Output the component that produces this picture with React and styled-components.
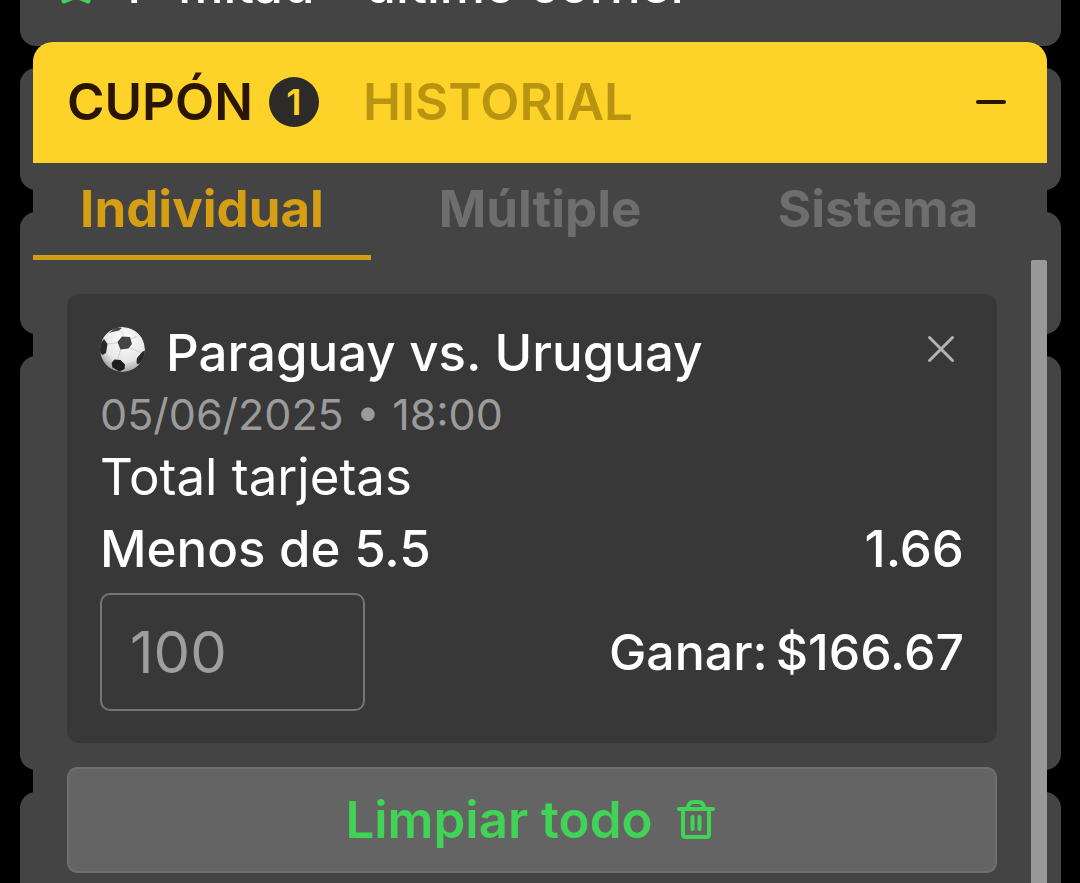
import React, { useState } from "react";
import styled, { createGlobalStyle } from "styled-components";

const GlobalStyle = createGlobalStyle`
  *, *::before, *::after { box-sizing: border-box; }
  body {
    margin: 0;
    background: #000;
    color: #fff;
    font-family: Inter, "Liberation Sans", sans-serif;
    font-size: 51px;
  }
  button, input { font: inherit; color: inherit; margin: 0; }
  button { border: 0; padding: 0; background: none; cursor: pointer; }
`;

const Page = styled.div`
  position: relative;
  height: 100vh;
  overflow: hidden;
`;

const Feed = styled.main`
  display: flex;
  flex-direction: column;
  gap: 22px;
  padding: 0 19px 0 20px;
  margin-top: -76px;
`;

const Market = styled.section`
  flex: none;
  display: flex;
  align-items: center;
  gap: 24px;
  height: ${(p) => (p.$open ? 414 : 122)}px;
  padding: 0 36px;
  border-radius: 16px;
  background: #444;
`;

const MarketTitle = styled.h2`
  margin: 0;
  font-size: 51px;
  line-height: 60px;
  font-weight: 500;
`;

const Sheet = styled.aside`
  position: absolute;
  inset: 42px 33px 0;
  display: flex;
  flex-direction: column;
  overflow: hidden;
  border-radius: 20px 20px 0 0;
  background: #444;
`;

const SheetHeader = styled.header`
  flex: none;
  display: flex;
  align-items: center;
  height: 121px;
  padding: 0 40px 2px 34px;
  background: #fdd329;
`;

const HeaderTab = styled.button`
  display: flex;
  align-items: center;
  gap: 16px;
  margin-right: 44px;
  font-weight: 600;
  line-height: 60px;
  color: ${(p) => (p.$active ? "#2a1600" : "#b99410")};
`;

const Badge = styled.span`
  display: grid;
  place-items: center;
  width: 50px;
  height: 50px;
  border-radius: 50%;
  background: #2d2b2a;
  color: #fdd329;
  font-size: 36px;
  line-height: 50px;
`;

const MinimizeButton = styled.button`
  display: flex;
  margin-left: auto;
  color: #2a1600;
`;

const Tabs = styled.nav`
  flex: none;
  display: flex;
`;

const Tab = styled.button`
  flex: 1;
  height: 97px;
  border-bottom: 5px solid ${(p) => (p.$active ? "#d09e16" : "transparent")};
  color: ${(p) => (p.$active ? "#d69e12" : "#6e6e6e")};
  font-weight: 700;
  line-height: 60px;
`;

const Body = styled.div`
  flex: 1;
  min-height: 0;
  display: flex;
`;

const Content = styled.div`
  flex: 1;
  min-width: 0;
  display: flex;
  flex-direction: column;
  gap: 24px;
  padding: 34px 34px 10px;
`;

const ScrollThumb = styled.div`
  width: 16px;
  border-radius: 2px 2px 0 0;
  background: #999;
`;

const BetCard = styled.article`
  padding: 33px 33px 32px;
  border-radius: 12px;
  background: #383838;
`;

const TitleRow = styled.div`
  display: flex;
  align-items: flex-start;
  height: 52px;
`;

const Match = styled.h3`
  flex: 1;
  margin: 0 0 0 20px;
  font-size: 51px;
  font-weight: 500;
  line-height: 52px;
`;

const CloseButton = styled.button`
  display: flex;
  color: #b4b4b4;
`;

const Kickoff = styled.p`
  margin: 0;
  font-size: 43px;
  line-height: 70px;
  color: #9b9b9b;
`;

const MarketName = styled.p`
  margin: 0;
  line-height: 56px;
`;

const Row = styled.div`
  display: flex;
  align-items: center;
  justify-content: space-between;
  font-weight: 500;
  line-height: 88px;
`;

const StakeInput = styled.input`
  width: 265px;
  height: 118px;
  padding: 0 28px;
  border: 2px solid #757575;
  border-radius: 10px;
  background: transparent;
  color: #9e9e9e;
  font-size: 58px;
  font-weight: 400;
  outline: none;
`;

const Winnings = styled.div`
  display: flex;
  gap: 8px;
  font-size: 50px;
`;

const ClearButton = styled.button`
  display: flex;
  align-items: center;
  justify-content: center;
  gap: 20px;
  flex: none;
  height: 106px;
  border: 2px solid #6f6f6f;
  border-radius: 10px;
  background: #646464;
  color: #41d356;
  font-weight: 600;
  line-height: 60px;
`;

const StarIcon = () => (
  <svg width="40" height="40" viewBox="0 0 40 40" aria-hidden="true">
    <path
      d="M20 3l5 10 11 1.500-8 8 4 13.500L20 31 8 36l4-13.500-8-8L15 13z"
      fill="#3fd45c"
      stroke="#3fd45c"
      strokeWidth="5"
      strokeLinejoin="round"
    />
  </svg>
);

const BallIcon = () => (
  <svg width="46" height="46" viewBox="0 0 46 46" role="img" aria-label="Fútbol">
    <defs>
      <radialGradient id="ballShade" cx="0.55" cy="0.3" r="0.72">
        <stop offset="0" stopColor="#fff" />
        <stop offset="0.65" stopColor="#e6e6e6" />
        <stop offset="1" stopColor="#9a9a9a" />
      </radialGradient>
      <clipPath id="ballClip"><circle cx="22.500" cy="22.500" r="22.500" /></clipPath>
    </defs>
    <g clipPath="url(#ballClip)">
      <circle cx="22.500" cy="22.500" r="22.500" fill="url(#ballShade)" />
      <path
        d="M24 9L21 4M31 12l6-3M30 21l7 3 4 2M21 22l-4 12M17 16l-11 1M27 37l9-2M6 27l6 8"
        fill="none"
        stroke="#cfcfcf"
        strokeWidth="1"
      />
      <path d="M17.500 15l4.500-5.500 8 .5 2 7-3.500 4.500-8 1z" fill="#444" />
      <path d="M9 6l6-5 7 0-3 2.500-7 1.500z" fill="#444" />
      <path d="M0 17l4-5 3.500 5-1.500 9-3.500 2L-1 25z" fill="#292929" />
      <path d="M11.500 36l3-3.500 6 .5 4.500 4.500-.5 4.500-5 2.500-7-4z" fill="#1d1d1d" />
      <path d="M37 31l5.500-6.500 3-1-.5 9-7 5-1.500-2z" fill="#292929" />
    </g>
  </svg>
);

const MinusIcon = () => (
  <svg width="32" height="32" viewBox="0 0 32 32" aria-hidden="true">
    <path d="M3 16h26" stroke="currentColor" strokeWidth="4" strokeLinecap="round" />
  </svg>
);

const CloseIcon = () => (
  <svg width="46" height="44" viewBox="0 0 46 44" aria-hidden="true">
    <path d="M11.500 10.500l23 23M34.500 10.500l-23 23" stroke="currentColor" strokeWidth="3" strokeLinecap="round" />
  </svg>
);

const TrashIcon = () => (
  <svg width="46" height="46" viewBox="0 0 46 46" fill="none" stroke="currentColor" strokeLinecap="round" strokeLinejoin="round" aria-hidden="true">
    <path d="M6 12h34M10 12v25q0 3 3 3h20q3 0 3-3V12M15 12q0-7 6-7h4q6 0 6 7" strokeWidth="4" />
    <path d="M19.500 20v12M26.500 20v12" strokeWidth="4" />
  </svg>
);

const TABS = ["Individual", "Múltiple", "Sistema"];

export default function App() {
  const [tab, setTab] = useState(TABS[0]);
  const [stake, setStake] = useState("100");

  return (
    <>
      <GlobalStyle />
      <Page>
        <Feed>
          <Market>
            <StarIcon />
            <MarketTitle>1ª mitad - último corner</MarketTitle>
          </Market>
          <Market />
          <Market />
          <Market $open />
          <Market />
        </Feed>
        <Sheet aria-label="Cupón de apuestas">
          <SheetHeader>
            <HeaderTab type="button" $active>
              CUPÓN <Badge>1</Badge>
            </HeaderTab>
            <HeaderTab type="button">HISTORIAL</HeaderTab>
            <MinimizeButton type="button" aria-label="Minimizar">
              <MinusIcon />
            </MinimizeButton>
          </SheetHeader>
          <Tabs>
            {TABS.map((name) => (
              <Tab key={name} type="button" $active={name === tab} onClick={() => setTab(name)}>
                {name}
              </Tab>
            ))}
          </Tabs>
          <Body>
            <Content>
              <BetCard>
                <TitleRow>
                  <BallIcon />
                  <Match>Paraguay vs. Uruguay</Match>
                  <CloseButton type="button" aria-label="Quitar apuesta">
                    <CloseIcon />
                  </CloseButton>
                </TitleRow>
                <Kickoff>05/06/2025 • 18:00</Kickoff>
                <MarketName>Total tarjetas</MarketName>
                <Row>
                  <span>Menos de 5.5</span>
                  <span>1.66</span>
                </Row>
                <Row>
                  <StakeInput
                    aria-label="Importe"
                    inputMode="decimal"
                    value={stake}
                    onChange={(e) => setStake(e.target.value)}
                  />
                  <Winnings>
                    <span>Ganar:</span>
                    <span>$166.67</span>
                  </Winnings>
                </Row>
              </BetCard>
              <ClearButton type="button">
                Limpiar todo <TrashIcon />
              </ClearButton>
            </Content>
            <ScrollThumb />
          </Body>
        </Sheet>
      </Page>
    </>
  );
}
